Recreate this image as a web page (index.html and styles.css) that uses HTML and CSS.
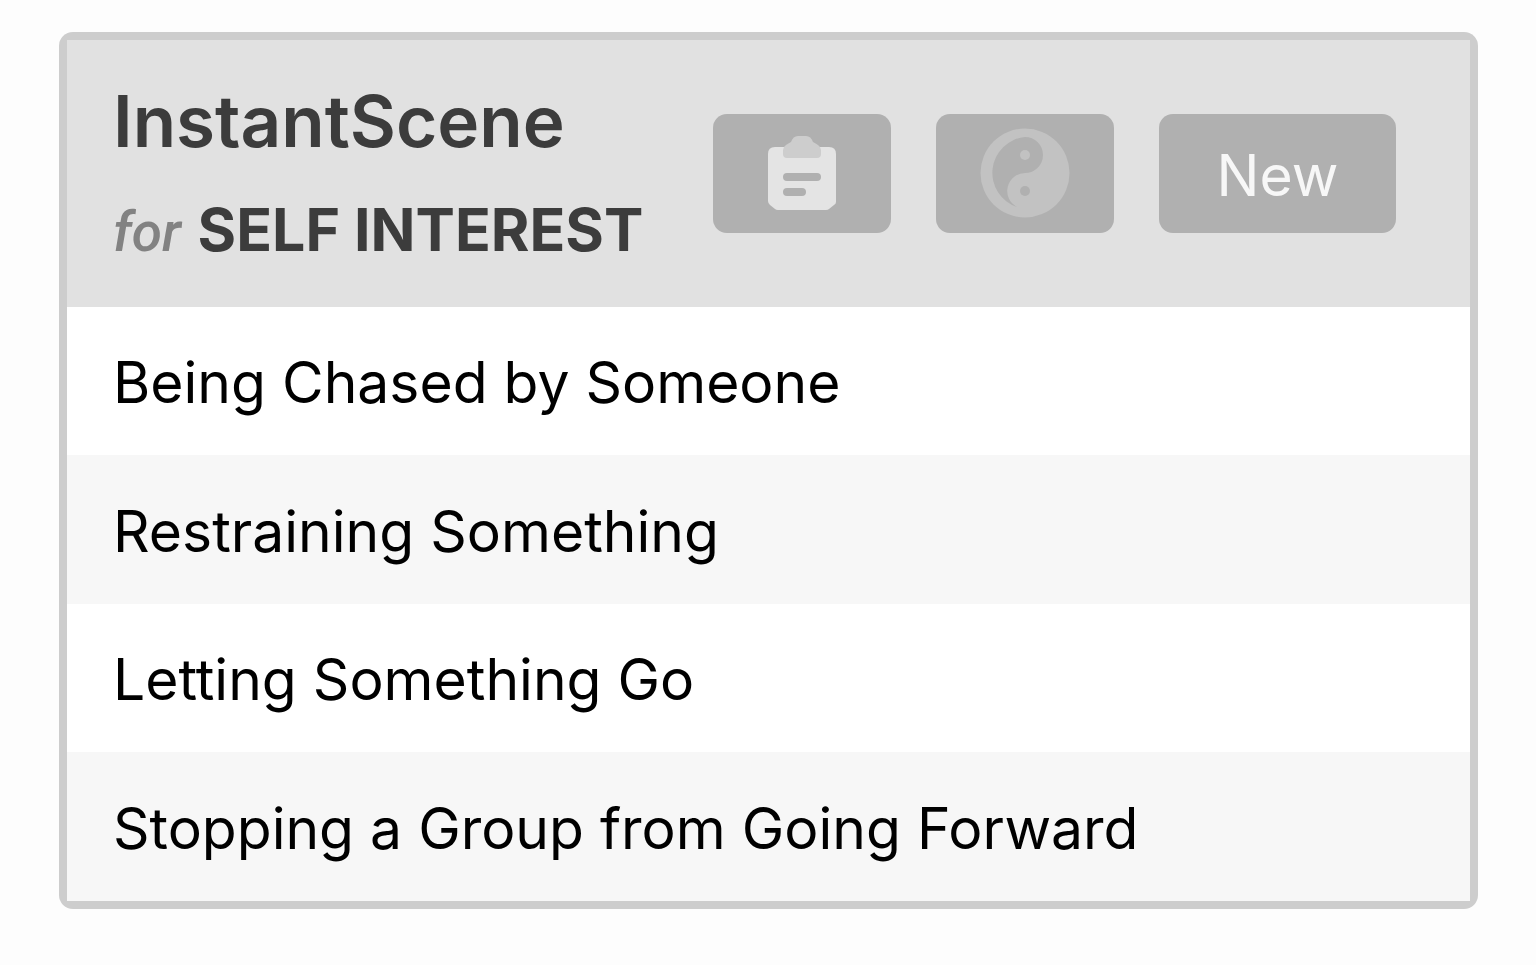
FILE: index.html
```html
<!DOCTYPE html>
<html lang="en">
<head>
<meta charset="utf-8">
<meta name="viewport" content="width=device-width, initial-scale=1">
<title>InstantScene</title>
<link rel="stylesheet" href="styles.css">
</head>
<body>
<main class="card">
  <header class="card-header">
    <div class="heading">
      <h1 class="title">InstantScene</h1>
      <p class="subtitle"><em class="for">for</em> <strong>SELF INTEREST</strong></p>
    </div>
    <div class="actions">
      <button class="btn" type="button" aria-label="Copy to clipboard">
        <svg class="icon" viewBox="0 0 90 90" aria-hidden="true">
          <path fill="#e4e4e4" d="M18 19H72Q79 19 79 26V74Q79 76 77 77L72 81Q71 82 69 82H21Q19 82 18 81L13 77Q11 75 11 73V26Q11 19 18 19Z"/>
          <path fill="#cdcdcd" d="M34 14Q36 8 41 8H49Q54 8 56 14Q58 15 61 17Q64 19 64 22V26Q64 30 60 30H30Q26 30 26 26V22Q26 19 29 17Q32 15 34 14Z"/>
          <path stroke="#b0b0b0" stroke-width="8" stroke-linecap="round" d="M30 49H60M30 64H45"/>
        </svg>
      </button>
      <button class="btn" type="button" aria-label="Yin and yang">
        <svg class="icon" viewBox="0 0 90 90" aria-hidden="true">
          <circle cx="45" cy="45" r="44.5" fill="#c2c2c2"/>
          <path fill="#b0b0b0" d="M45 9A18 18 0 0 1 45 45A18 18 0 0 0 37 79A36 36 0 0 1 45 9Z"/>
          <circle cx="45" cy="27" r="5" fill="#c2c2c2"/>
          <circle cx="45" cy="63" r="5" fill="#b0b0b0"/>
        </svg>
      </button>
      <button class="btn btn-new" type="button">New</button>
    </div>
  </header>
  <ul class="scenes">
    <li class="scene">Being Chased by Someone</li>
    <li class="scene">Restraining Something</li>
    <li class="scene">Letting Something Go</li>
    <li class="scene">Stopping a Group from Going Forward</li>
  </ul>
</main>
</body>
</html>
```
FILE: styles.css
```css
* {
  box-sizing: border-box;
}

body {
  margin: 0;
  padding: 32px 58px 56px 59px;
  background: #fdfdfd;
  color: #000;
  font-family: Inter, "Liberation Sans", sans-serif;
}

.card {
  padding: 8px;
  border-radius: 14px;
  background: #cdcdcd;
}

.card-header {
  display: flex;
  justify-content: space-between;
  align-items: center;
  padding: 39px 74px 40px 46px;
  background: #e1e1e1;
}

.heading {
  color: #3c3c3c;
  white-space: nowrap;
}

.title {
  margin: 0;
  font-size: 71px;
  font-weight: 600;
  line-height: 84px;
}

.subtitle {
  margin: 30px 0 0;
  font-size: 59px;
  line-height: 74px;
}

.subtitle strong {
  font-weight: 700;
}

.for {
  color: #828282;
  font-family: Roboto, "Liberation Sans", sans-serif;
  font-size: 55px;
  font-weight: 500;
  line-height: 1;
}

.actions {
  display: flex;
  gap: 45px;
}

.btn {
  display: flex;
  align-items: center;
  justify-content: center;
  width: 178px;
  height: 119px;
  padding: 0;
  border: 0;
  border-radius: 14px;
  background: #b0b0b0;
  color: #f7f7f7;
  font: inherit;
  font-size: 57px;
}

.btn-new {
  width: 237px;
  padding-top: 4px;
}

.icon {
  width: 90px;
  height: 90px;
}

.scenes {
  margin: 0;
  padding: 0;
  list-style: none;
}

.scene {
  padding: 36px 46px 32px;
  background: #fff;
  font-size: 57px;
  line-height: 80px;
}

.scene:nth-child(even) {
  padding-top: 37px;
  background: #f7f7f7;
}
```
